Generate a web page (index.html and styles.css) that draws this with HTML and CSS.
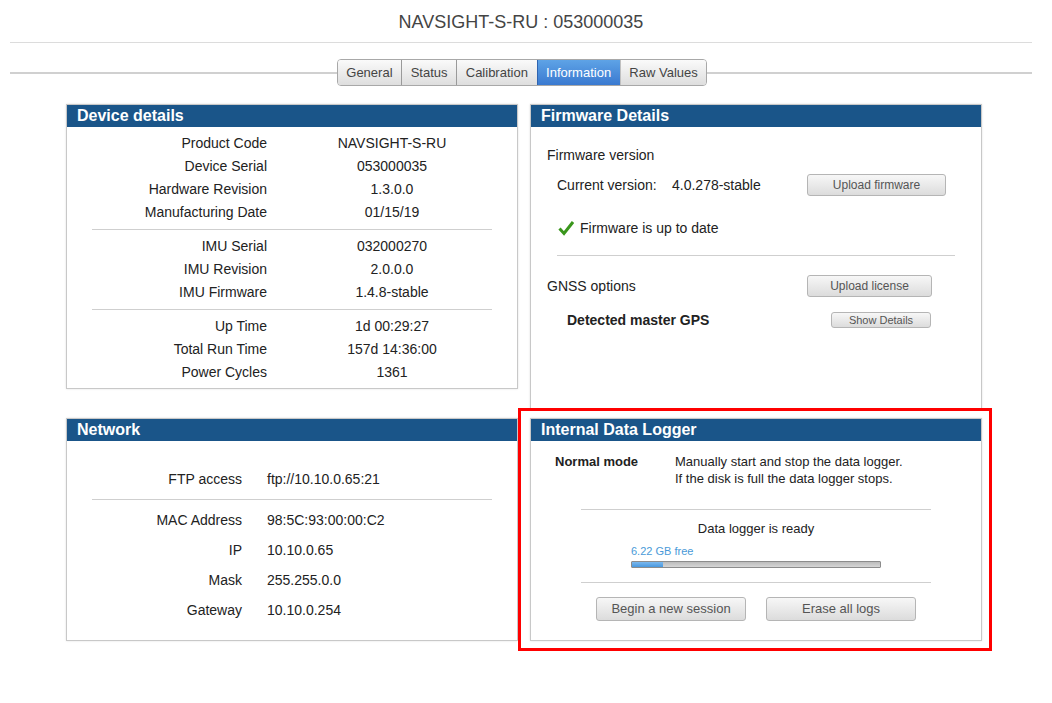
FILE: index.html
```html
<!DOCTYPE html>
<html>
<head>
<meta charset="utf-8">
<title>NAVSIGHT-S-RU</title>
<link rel="stylesheet" href="styles.css">
</head>
<body>
<header class="title">NAVSIGHT-S-RU : 053000035</header>
<nav class="tabbar">
  <div class="tabs">
    <span class="tab">General</span>
    <span class="tab">Status</span>
    <span class="tab">Calibration</span>
    <span class="tab active">Information</span>
    <span class="tab">Raw Values</span>
  </div>
</nav>
<main class="content">
  <div class="grid">
    <section class="panel device">
      <h2 class="panel-head">Device details</h2>
      <div class="device-body">
        <div class="kv"><span class="k">Product Code</span><span class="v">NAVSIGHT-S-RU</span></div>
        <div class="kv"><span class="k">Device Serial</span><span class="v">053000035</span></div>
        <div class="kv"><span class="k">Hardware Revision</span><span class="v">1.3.0.0</span></div>
        <div class="kv"><span class="k">Manufacturing Date</span><span class="v">01/15/19</span></div>
        <hr class="sep">
        <div class="kv"><span class="k">IMU Serial</span><span class="v">032000270</span></div>
        <div class="kv"><span class="k">IMU Revision</span><span class="v">2.0.0.0</span></div>
        <div class="kv"><span class="k">IMU Firmware</span><span class="v">1.4.8-stable</span></div>
        <hr class="sep">
        <div class="kv"><span class="k">Up Time</span><span class="v">1d 00:29:27</span></div>
        <div class="kv"><span class="k">Total Run Time</span><span class="v">157d 14:36:00</span></div>
        <div class="kv"><span class="k">Power Cycles</span><span class="v">1361</span></div>
      </div>
    </section>

    <section class="panel firmware">
      <h2 class="panel-head">Firmware Details</h2>
      <div class="fw-body">
        <div class="fw-title">Firmware version</div>
        <div class="fw-current">
          <span>Current version:</span>
          <span>4.0.278-stable</span>
          <button class="btn btn-fw">Upload firmware</button>
        </div>
        <div class="fw-ok">
          <svg class="check" width="16" height="16" viewBox="0 0 16 16"><path d="M1.5 8.5 L6 13.5 L15 2" fill="none" stroke="#3a961c" stroke-width="3" stroke-linejoin="miter"/></svg>
          <span>Firmware is up to date</span>
        </div>
        <hr class="sep fw-sep">
        <div class="fw-gnss">
          <span>GNSS options</span>
          <button class="btn btn-lic">Upload license</button>
        </div>
        <div class="fw-gps">
          <span class="bold">Detected master GPS</span>
          <button class="btn btn-small">Show Details</button>
        </div>
      </div>
    </section>

    <section class="panel network">
      <h2 class="panel-head">Network</h2>
      <div class="net-body">
        <div class="nkv"><span class="k">FTP access</span><span class="v">ftp://10.10.0.65:21</span></div>
        <hr class="sep">
        <div class="nkv"><span class="k">MAC Address</span><span class="v">98:5C:93:00:00:C2</span></div>
        <div class="nkv"><span class="k">IP</span><span class="v">10.10.0.65</span></div>
        <div class="nkv"><span class="k">Mask</span><span class="v">255.255.0.0</span></div>
        <div class="nkv"><span class="k">Gateway</span><span class="v">10.10.0.254</span></div>
      </div>
    </section>

    <section class="panel logger">
      <h2 class="panel-head">Internal Data Logger</h2>
      <div class="log-body">
        <div class="mode">
          <span class="bold">Normal mode</span>
          <span>Manually start and stop the data logger.<br>If the disk is full the data logger stops.</span>
        </div>
        <hr class="log-sep">
        <div class="ready">Data logger is ready</div>
        <div class="free">6.22 GB free</div>
        <div class="bar"><div class="fill" style="width:12.4%"></div></div>
        <hr class="log-sep sep2">
        <div class="actions">
          <button class="btn btn-log">Begin a new session</button>
          <button class="btn btn-log">Erase all logs</button>
        </div>
      </div>
    </section>
  </div>
  <div class="highlight"></div>
</main>
</body>
</html>
```

FILE: styles.css
```css
* { box-sizing: border-box; }
html, body { min-height: 100%; }
body {
  margin: 0;
  min-height: 703px;
  font-family: "Liberation Sans", Arial, sans-serif;
  color: #222;
  background: #fff;
}
.title {
  margin: 0 20px 0 10px;
  height: 43px;
  padding-top: 12px;
  font-size: 18px;
  line-height: 20px;
  text-align: center;
  color: #444;
  border-bottom: 1px solid #dcdcdc;
}
.tabbar {
  margin: 0 20px 0 10px;
  padding: 16px 0 0 2px;
  display: flex;
  justify-content: center;
  background: linear-gradient(#d0d0d0, #d0d0d0) no-repeat 0 29px / 100% 2px;
}
.tabs {
  display: flex;
  border: 1px solid #a8a8a8;
  border-radius: 4px;
  overflow: hidden;
  height: 27px;
}
.tab {
  padding: 0 8.6px;
  font-size: 13px;
  line-height: 25px;
  color: #444;
  background: linear-gradient(#fafafa, #dedede);
  border-left: 1px solid #9a9a9a;
}
.tab:first-child { border-left: none; }
.tab.active {
  color: #fff;
  background: linear-gradient(#5ea3e6, #3a79d0);
  border-left-color: #2f64b0;
}
.tab.active + .tab { border-left-color: #c0c0c0; }

.content {
  position: relative;
  margin: 18px 0 0 66px;
  padding-bottom: 30px;
  width: 916px;
}
.grid {
  display: grid;
  grid-template-columns: 452px 452px;
  grid-template-rows: 305px auto;
  column-gap: 12px;
  row-gap: 9px;
}
.panel {
  border: 1px solid #c8c8c8;
  box-shadow: 0 0 2px rgba(0,0,0,0.12);
  background: #fff;
  font-size: 14px;
}
.device { align-self: start; }
.panel-head {
  margin: 0;
  height: 22px;
  padding-left: 10px;
  background: #1a5589;
  color: #fff;
  font-size: 16px;
  font-weight: bold;
  line-height: 22px;
}
.sep {
  border: none;
  border-top: 1px solid #cfcfcf;
  margin: 5px 25px 5px 25px;
  height: 0;
}
.device-body { padding: 5px 0 4px; }
.kv {
  display: grid;
  grid-template-columns: 225px 200px;
  height: 23px;
  line-height: 23px;
}
.kv .k { text-align: right; padding-right: 25px; }
.kv .v { text-align: center; }

.net-body { padding: 23px 0 15px; }
.nkv {
  display: grid;
  grid-template-columns: 200px auto;
  height: 30px;
  line-height: 30px;
}
.nkv .k { text-align: right; padding-right: 25px; }

.fw-body { padding: 0 16px; }
.fw-title { margin-top: 19px; line-height: 18px; }
.fw-current {
  margin-top: 10px;
  padding-left: 10px;
  display: grid;
  grid-template-columns: 115px 135px auto;
  align-items: center;
  height: 22px;
}
.fw-ok {
  margin-top: 23px;
  padding-left: 11px;
  display: flex;
  align-items: center;
  gap: 6px;
  line-height: 18px;
}
.check { display: block; margin-top: -1px; }
.fw-sep { margin: 18px 10px 0 10px; }
.fw-gnss {
  margin-top: 19px;
  display: grid;
  grid-template-columns: 260px auto;
  align-items: center;
  height: 22px;
}
.fw-gps {
  margin-top: 15px;
  padding-left: 20px;
  display: grid;
  grid-template-columns: 264px auto;
  align-items: center;
  height: 16px;
}
.bold { font-weight: bold; }

.btn {
  font-family: "Liberation Sans", Arial, sans-serif;
  font-size: 12px;
  color: #555;
  background: linear-gradient(#f7f7f7, #dcdcdc);
  border: 1px solid #b5b5b5;
  border-radius: 3px;
  padding: 0;
  margin: 0;
  height: 22px;
  line-height: 20px;
  text-align: center;
}
.btn-fw { width: 139px; }
.btn-lic { width: 125px; }
.btn-small { width: 100px; height: 16px; font-size: 11px; line-height: 14px; }
.btn-log { width: 150px; height: 24px; font-size: 13px; line-height: 22px; }

.log-body { padding: 12px 0 16px; font-size: 13px; }
.mode {
  padding-left: 24px;
  display: grid;
  grid-template-columns: 120px auto;
  line-height: 17px;
}
.log-sep {
  border: none;
  border-top: 1px solid #cfcfcf;
  margin: 22px 50px 0 50px;
  height: 0;
}
.ready { margin-top: 10px; text-align: center; line-height: 17px; }
.free {
  margin: 8px 0 0 100px;
  font-size: 11px;
  line-height: 13px;
  color: #4a9ad8;
}
.bar {
  margin: 3px 0 0 100px;
  width: 250px;
  height: 7px;
  background: linear-gradient(#bcbcbc, #d6d6d6);
  border: 1px solid #8c8c8c;
  border-radius: 1px;
}
.fill {
  height: 100%;
  background: linear-gradient(#7ab8ee, #4a98de);
}
.sep2 { margin-top: 14px; }
.actions {
  margin-top: 14px;
  display: flex;
  justify-content: center;
  gap: 20px;
}

.highlight {
  position: absolute;
  left: 452px;
  top: 304px;
  width: 474px;
  height: 243px;
  border: 3px solid #f00;
  pointer-events: none;
}
```
